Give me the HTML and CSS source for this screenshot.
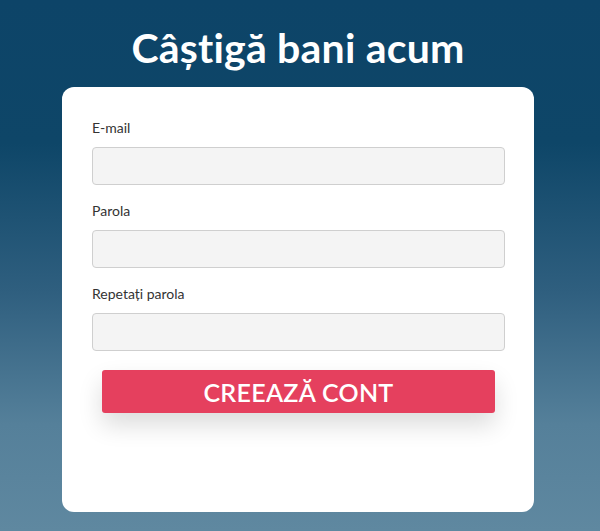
FILE: index.html
```html
<!DOCTYPE html>
<html lang="ro">
<head>
<meta charset="utf-8">
<link rel="stylesheet" href="styles.css">
</head>
<body>
<div class="page">
  <h1 class="title">Câștigă bani acum</h1>
  <form class="card">
    <label class="field">
      <span class="label">E-mail</span>
      <input class="input" type="text">
    </label>
    <label class="field">
      <span class="label">Parola</span>
      <input class="input" type="password">
    </label>
    <label class="field">
      <span class="label">Repetați parola</span>
      <input class="input" type="password">
    </label>
    <button class="btn" type="button">CREEAZĂ CONT</button>
  </form>
</div>
</body>
</html>
```
FILE: styles.css
```css
html, body {
  margin: 0;
  padding: 0;
  height: 100%;
}
body {
  background: linear-gradient(to bottom, #0d4468 0%, #0e4668 27%, #2f5f7f 55%, #55809a 80%, #5f88a0 100%);
  font-family: Lato, "Open Sans", sans-serif;
}
.page {
  width: 472px;
  margin: 0 0 0 calc(50% - 238px);
  padding-top: 24px;
  display: flex;
  flex-direction: column;
  align-items: center;
}
.title {
  margin: 0;
  color: #fff;
  font-size: 41px;
  font-weight: 700;
  line-height: 48px;
  height: 63px;
  letter-spacing: 0.2px;
}
.card {
  box-sizing: border-box;
  width: 472px;
  height: 425px;
  background: #fff;
  border-radius: 12px;
  padding: 32px 29px 0 30px;
  display: flex;
  flex-direction: column;
}
.field {
  display: flex;
  flex-direction: column;
  margin-bottom: 17px;
}
.label {
  font-size: 14px;
  color: #333;
  line-height: 18px;
  margin-bottom: 10px;
}
.input {
  box-sizing: border-box;
  height: 38px;
  width: 100%;
  background: #f4f4f4;
  border: 1px solid #cfcfcf;
  border-radius: 4px;
  margin: 0;
}
.btn {
  margin: 2px 10px 0;
  height: 43px;
  border: none;
  border-radius: 3px;
  background: #e5405e;
  color: #fff;
  font-family: Lato, sans-serif;
  font-size: 25px;
  font-weight: 600;
  letter-spacing: 0.3px;
  box-shadow: 0 12px 24px rgba(0, 0, 0, 0.14);
  padding: 0;
}
```
